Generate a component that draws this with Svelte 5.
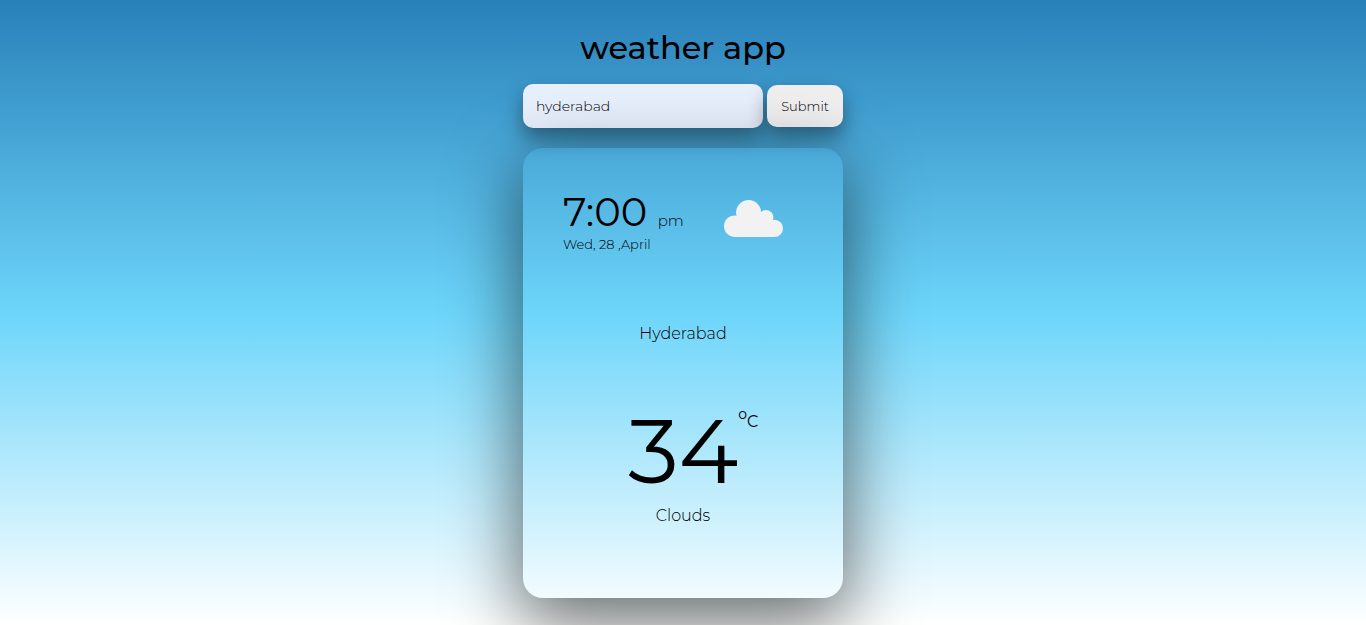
<script>
  let city = $state('hyderabad');
  const report = {
    time: '7:00',
    half: 'pm',
    date: 'Wed, 28 ,April',
    city: 'Hyderabad',
    temp: 34,
    sky: 'Clouds'
  };
</script>

<main>
  <h1>weather app</h1>
  <form onsubmit={(e) => e.preventDefault()}>
    <input type="text" aria-label="City" bind:value={city} />
    <button type="submit">Submit</button>
  </form>
  <section class="card">
    <header>
      <div>
        <p class="time">{report.time} <span>{report.half}</span></p>
        <p class="date">{report.date}</p>
      </div>
      <svg viewBox="0 0 59 38" width="59" height="38" role="img" aria-label="Cloudy">
        <g fill="#f1f2f1">
          <circle cx="10.8" cy="26.2" r="10.8" />
          <circle cx="24.6" cy="12.5" r="12.5" />
          <circle cx="42" cy="17.4" r="7.4" />
          <circle cx="50.4" cy="28.4" r="8.6" />
          <path d="M10.8 18L20 12L42 14L50.4 24V37H10.8Z" />
        </g>
      </svg>
    </header>
    <p class="city">{report.city}</p>
    <p class="temp">{report.temp}<sup><i>o</i>C</sup></p>
    <p class="sky">{report.sky}</p>
  </section>
</main>

<style>
  :global(body) {
    min-height: 100vh;
    background: linear-gradient(#2980b9, #6dd5fa, #ffffff) no-repeat;
    overflow: hidden;
  }
  main {
    display: flex;
    flex-direction: column;
    align-items: center;
    padding-top: 28px;
    color: #000;
    font-family: Montserrat, Inter, sans-serif;
    font-size: 16px;
    font-weight: 300;
  }
  h1,
  p {
    margin: 0;
  }
  h1 {
    font-size: 32px;
    line-height: 40px;
    font-weight: 500;
  }
  form {
    display: flex;
    align-items: center;
    gap: 4px;
    margin-top: 16px;
  }
  input,
  button {
    box-sizing: border-box;
    border: 0;
    border-radius: 10px;
    font-family: inherit;
    font-weight: 300;
    color: #000;
    box-shadow: rgba(0, 0, 0, 0.4) 0 10px 20px;
  }
  input {
    width: 240px;
    height: 44px;
    padding: 0 13px;
    background: #e8f0fe;
    font-size: 14px;
  }
  button {
    width: 76px;
    height: 42px;
    padding: 0;
    background: #efefef;
    font-size: 13px;
  }
  .card {
    position: relative;
    box-sizing: border-box;
    width: 320px;
    min-height: 450px;
    margin-top: 20px;
    padding: 40px;
    border-radius: 20px;
    text-align: center;
    box-shadow: rgba(0, 0, 0, 0.56) 0 22px 70px 4px;
  }
  header {
    display: flex;
    justify-content: space-between;
    padding-right: 20px;
    text-align: left;
  }
  header svg {
    margin-top: 12px;
  }
  .time {
    height: 48px;
    font-size: 40px;
    line-height: 48px;
    font-weight: 400;
  }
  .time span {
    font-size: 15px;
    font-weight: 300;
  }
  .date {
    font-size: 13px;
    line-height: 16px;
  }
  .city {
    margin-top: 72px;
    line-height: 20px;
  }
  .temp {
    height: 108px;
    margin-top: 53px;
    font-size: 90px;
    line-height: 108px;
    font-weight: 400;
  }
  .temp sup {
    display: inline-block;
    width: 0;
    font-size: 16px;
    line-height: 20px;
    vertical-align: 56px;
    white-space: nowrap;
  }
  .temp i {
    font-size: 14px;
    font-style: normal;
    vertical-align: 8px;
  }
  .sky {
    margin-top: 1px;
    line-height: 20px;
  }
</style>
